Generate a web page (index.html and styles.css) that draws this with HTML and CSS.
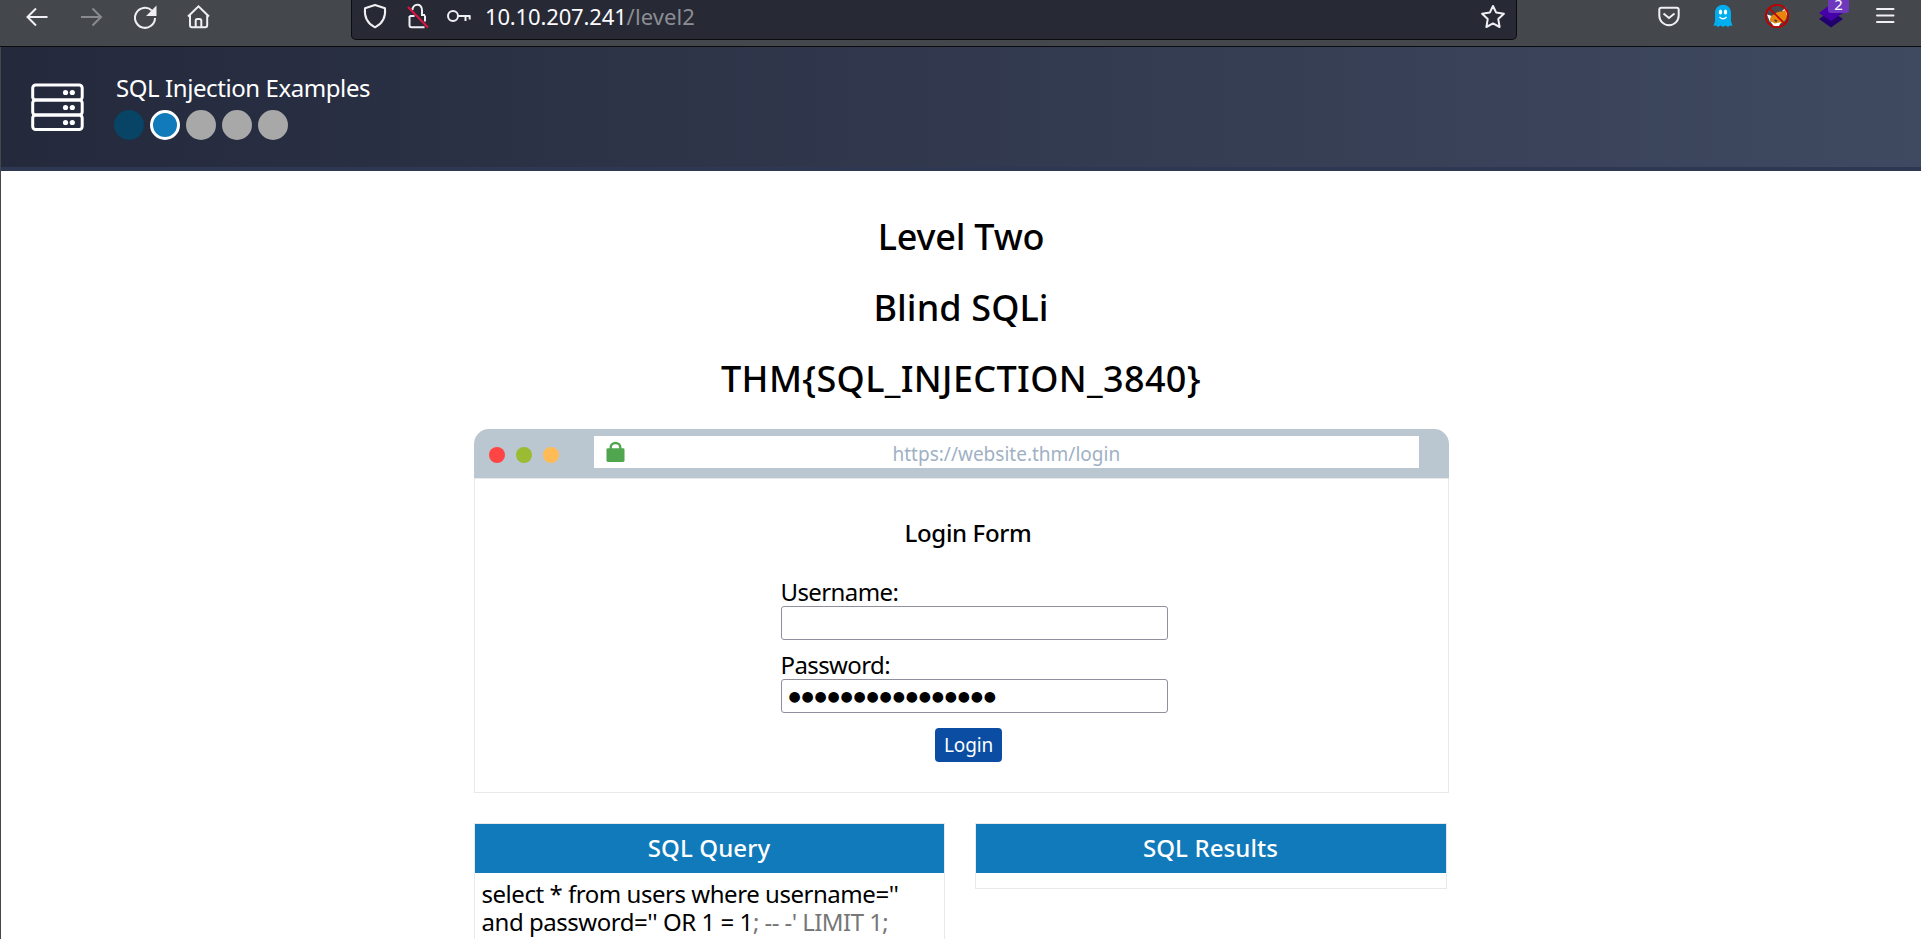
FILE: index.html
```html
<!DOCTYPE html>
<html lang="en">
<head>
<meta charset="utf-8">
<title>SQL Injection Examples</title>
<link rel="stylesheet" href="styles.css">
</head>
<body>
<div class="toolbar">
  <div class="nav">
    <svg class="tool" viewBox="0 0 54 40"><path d="M17.500 17H37.500M26 8.500L17.500 17l8.500 8.500"/></svg>
    <svg class="tool dim" viewBox="0 0 54 40"><path d="M17 17h20M28.500 8.500L37 17l-8.500 8.500"/></svg>
    <svg class="tool" viewBox="0 0 54 40"><path d="M33.800 10.500A10 10 0 1 0 37 18"/><path class="solid" d="M37.500 8v7h-7z"/></svg>
    <svg class="tool" viewBox="0 0 54 40"><path d="M16 16.500L26.500 6.300 37 16.500M18 15v10.300a2 2 0 0 0 2 2h13.200a2 2 0 0 0 2-2V15M23.700 27v-6.500a1.500 1.500 0 0 1 1.500-1.500h2.600a1.500 1.500 0 0 1 1.500 1.500V27"/></svg>
  </div>
  <div class="urlbar">
    <svg class="url-icon" viewBox="0 0 42 40"><path d="M23 5l10 3.300c.8 8-2 15-10 19-8-4-10.800-11-10-19z" stroke-linejoin="round"/></svg>
    <svg class="url-icon" viewBox="0 0 42 40"><path d="M18.500 10c0-6.500 9.500-7.500 9.500 0v5h3M31 15.500v6M15.500 16v9.300a2 2 0 0 0 2 2h13M15.500 16h5"/><path class="slash" d="M14 7l20 20.500"/></svg>
    <svg class="url-icon" viewBox="0 0 42 40"><circle cx="17" cy="16" r="5"/><path d="M22 16h12.500M33.700 16v3.500M29.500 16v5"/></svg>
    <div class="address"><span class="host">10.10.207.241</span><span class="path">/level2</span></div>
    <svg class="url-icon star" viewBox="0 0 48 40"><path stroke-linejoin="round" d="M25 6l3.200 6.600 7.700 1.200-5.600 5.300 1.300 7.900-6.600-3.600-6.600 3.600 1.300-7.900-5.600-5.300 7.700-1.200z"/></svg>
  </div>
  <div class="extensions">
    <svg class="tool" viewBox="0 0 54 40"><path d="M19.300 7.800h15.400a2 2 0 0 1 2 2v5.700a9.700 9.700 0 0 1-19.400 0V9.800a2 2 0 0 1 2-2zM21.500 13.500l5.500 4.500 5.500-4.500"/></svg>
    <svg class="tool plain" viewBox="0 0 54 40"><path fill="#00aef0" d="M19 13c0-11 16-11 16 0v8l1.500 5-2.500-.5-2 1.500-2.500-1.500L27 27l-2.500-1.500L22 27l-2-1.500-2.500.5L19 21z"/><ellipse cx="24.500" cy="12" rx="1.700" ry="2.600" fill="#fff"/><ellipse cx="29.500" cy="12" rx="1.700" ry="2.600" fill="#fff"/><path d="M23.500 17q3.500 3.500 7 0" fill="none" stroke="#fff" stroke-width="1.300"/></svg>
    <svg class="tool plain" viewBox="0 0 54 40"><path fill="#fff" d="M17 14.500l5 1.500-2 6zM32 11l4-3.500 1.500 8.500z"/><path fill="#e8850c" d="M20 20q0-4.500 4-5.500 3-3.500 8-3l3-1.500q3 4 1 9-2 4-7 5-6 1-9-4z"/><path fill="#fff" d="M20 21l5 2.500 6-1.500-2 4-5 .5z"/><path fill="none" stroke="#444" d="M24.500 20l2.500 1.500"/><circle cx="27" cy="16" r="11.200" fill="none" stroke="#c00000" stroke-width="1.700"/><path d="M19 8l16 16" stroke="#c00000" stroke-width="1.700"/></svg>
    <div class="stack"><svg class="tool plain" viewBox="0 0 54 40"><path fill="#20006c" d="M27 11l12 8-12 8.500L15 19z"/><path fill="#4600a8" d="M27 4l12 9-12 8-12-8z"/></svg><span class="badge">2</span></div>
    <svg class="tool" viewBox="0 0 54 40"><path d="M19 9h16.500M19 15.500h16.500M19 22h16.500" stroke-linecap="round"/></svg>
  </div>
</div>
<div class="page">
  <header class="header">
    <svg class="server" viewBox="0 0 54 50"><g fill="none" stroke="#fff" stroke-width="3"><rect x="1.700" y="3" width="49.500" height="15" rx="3"/><rect x="1.700" y="18" width="49.500" height="15" rx="3"/><rect x="1.700" y="33" width="49.500" height="14.500" rx="3"/></g><g fill="#fff"><circle cx="34.500" cy="10.500" r="2.600"/><circle cx="41.300" cy="10.500" r="2.600"/><circle cx="34.500" cy="25.500" r="2.600"/><circle cx="41.300" cy="25.500" r="2.600"/><circle cx="34.500" cy="40.500" r="2.600"/><circle cx="41.300" cy="40.500" r="2.600"/></g></svg>
    <div>
      <div class="title">SQL Injection Examples</div>
      <div class="steps"><i class="step done"></i><i class="step current"></i><i class="step"></i><i class="step"></i><i class="step"></i></div>
    </div>
  </header>
  <main class="content">
    <h1 class="heading level">Level Two</h1>
    <h1 class="heading topic">Blind SQLi</h1>
    <h1 class="heading flag">THM{SQL_INJECTION_3840}</h1>
    <section class="browser">
      <div class="browser-bar">
        <i class="dot red"></i><i class="dot green"></i><i class="dot amber"></i>
        <div class="browser-url">
          <svg class="padlock" viewBox="0 0 20 22"><path d="M5 8V6a5 4.500 0 0 1 10 0v2" fill="none" stroke="#4fa64f" stroke-width="2.500"/><rect x=".5" y="7" width="19" height="14.500" rx="1.500" fill="#4fa64f"/></svg>
          <span class="link">https://website.thm/login</span>
        </div>
      </div>
      <div class="browser-body">
        <h2 class="form-title">Login Form</h2>
        <div class="form">
          <label class="label">Username:</label>
          <div class="field"></div>
          <label class="label second">Password:</label>
          <div class="field">●●●●●●●●●●●●●●●●</div>
        </div>
        <button class="login">Login</button>
      </div>
    </section>
    <div class="panels">
      <section class="panel">
        <h2 class="panel-title">SQL Query</h2>
        <div class="query">
          <div>select * from users where username=''</div>
          <div class="second-line">and password='' OR 1 = 1<span class="muted">; -- -' LIMIT 1;</span></div>
        </div>
      </section>
      <section class="panel results"><h2 class="panel-title">SQL Results</h2></section>
    </div>
  </main>
</div>
</body>
</html>
```
FILE: styles.css
```css
* { box-sizing: border-box; }
html { overflow: hidden; }
body { margin: 0; height: 939px; overflow: hidden; background: #fff; color: #000; font-family: "Noto Sans", sans-serif; font-size: 24px; }
.toolbar { display: flex; height: 47px; background: #44474c; border-bottom: 1px solid #0c0c0d; }
.nav { display: flex; width: 351px; padding-left: 10px; }
.tool, .url-icon { display: block; flex: none; width: 54px; height: 40px; fill: none; stroke: #f0f0f4; stroke-width: 2; }
.tool .solid { fill: #f0f0f4; }
.tool.plain { stroke: none; }
.dim { opacity: .4; }
.urlbar { display: flex; width: 1166px; height: 40px; background: #272934; border: 1px solid #0c0c0d; border-top: 0; border-radius: 0 0 5px 5px; }
.url-icon { width: 42px; }
.url-icon .slash { stroke: #e2123f; }
.address { flex: 1; padding-left: 7px; font-size: 22px; line-height: 33px; letter-spacing: -.15px; color: #fbfbfe; }
.path { color: #8c8d94; letter-spacing: .1px; }
.url-icon.star { width: 48px; }
.extensions { display: flex; margin-left: 125px; }
.stack { position: relative; }
.badge { position: absolute; left: 24px; top: -8px; width: 21px; height: 21px; border-radius: 3px; background: #6d38bd; color: #fff; font-size: 15px; line-height: 24px; text-align: center; }
.page { height: 892px; overflow: hidden; border-left: 1px solid #45474c; }
.header { display: flex; height: 124px; padding: 24px 0 0 30px; gap: 29px; border-bottom: 4px solid #2e3853; background: linear-gradient(90deg, #24293c, #3f4960); }
.server { width: 54px; height: 50px; margin-top: 11px; }
.title { margin-left: 2px; height: 39px; line-height: 34px; letter-spacing: -.42px; color: #fff; white-space: nowrap; }
.steps { display: flex; gap: 6px; }
.step { width: 30px; height: 30px; border-radius: 50%; background: #a8a8a8; }
.done { background: #074466; }
.current { background: #107aba; border: 3px solid #fff; }
.content { width: 975px; margin: 0 auto; padding-top: 30px; }
.heading { margin: 0; height: 71px; line-height: 71px; font-size: 36px; font-weight: 500; text-align: center; white-space: nowrap; }
.level { letter-spacing: -.2px; }
.topic { letter-spacing: .1px; }
.flag { letter-spacing: .35px; }
.browser { margin-top: 15px; border-radius: 15px 15px 0 0; overflow: hidden; }
.browser-bar { display: flex; align-items: center; height: 49px; padding: 3px 30px 0 15px; gap: 11px; background: #bac6d0; }
.dot { width: 16px; height: 16px; border-radius: 50%; }
.red { background: #ff4444; }
.green { background: #9abb32; }
.amber { background: #ffbb55; }
.browser-url { display: flex; align-items: center; flex: 1; height: 32px; margin: -6px 0 0 24px; padding-left: 12px; background: #fff; color: #a0b1c4; font-size: 19px; }
.padlock { width: 19px; height: 22px; margin-right: 268px; }
.link { padding-top: 4px; }
.browser-body { display: flex; flex-direction: column; align-items: center; height: 315px; border: 1px solid #e8e8e8; padding: 38px 0 0 14px; }
.form-title { margin: 0; height: 61px; line-height: 32px; font-size: 24px; font-weight: 500; letter-spacing: -.35px; }
.form { width: 387px; margin-left: 12px; }
.label { display: block; height: 28px; line-height: 28px; letter-spacing: -.6px; }
.second { margin-top: 11px; }
.field { height: 34px; border: 1px solid #8f8f9d; border-radius: 3px; padding-left: 7px; font: 14px/32px "DejaVu Sans", sans-serif; letter-spacing: .8px; }
.login { width: 67px; height: 34px; margin-top: 15px; padding: 0 0 0 1px; border: 0; border-radius: 4px; background: #0b4da2; color: #fff; font: 19px "Noto Sans", sans-serif; letter-spacing: -.15px; }
.panels { display: flex; gap: 30px; margin-top: 30px; align-items: flex-start; }
.panel { width: 471px; height: 116px; border: 1px solid #e8e8e8; border-bottom: 0; }
.results { width: 472px; height: 66px; border-bottom: 1px solid #e8e8e8; }
.panel-title { margin: 0; height: 49px; line-height: 47px; background: #107aba; color: #fff; font-size: 24px; font-weight: 500; letter-spacing: .1px; text-align: center; }
.query { padding: 7px 0 0 7px; line-height: 28px; letter-spacing: -.46px; white-space: nowrap; }
.second-line { letter-spacing: -.46px; }
.second-line .muted { color: #777; letter-spacing: -.55px; }
```
